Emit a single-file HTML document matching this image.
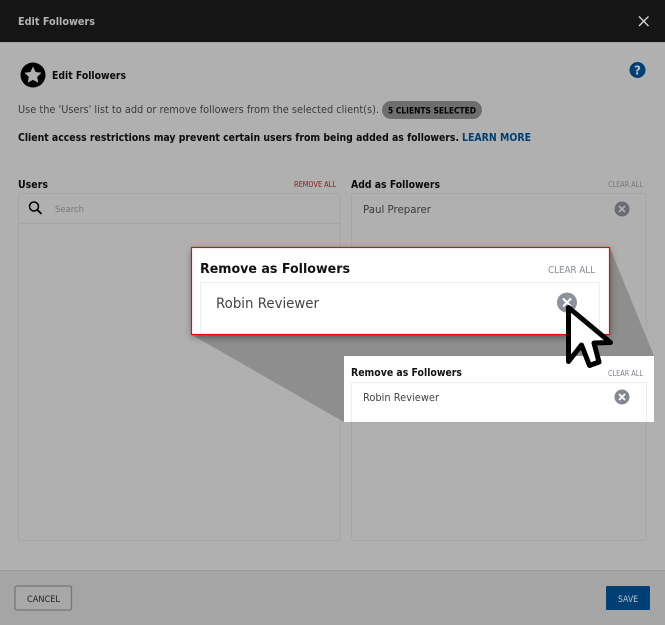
<!DOCTYPE html>
<html><head><meta charset="utf-8"><title>Edit Followers</title>
<style>
html,body{margin:0;padding:0;width:665px;height:625px;overflow:hidden;background:#b0b0b0}
svg{display:block}
text{font-family:"DejaVu Sans",sans-serif}
.b{font-weight:bold}
</style></head><body>
<svg width="665" height="625" viewBox="0 0 665 625" xmlns="http://www.w3.org/2000/svg">
<defs>
<filter id="sh" x="-10%" y="-20%" width="120%" height="150%"><feGaussianBlur stdDeviation="4"/></filter>
<clipPath id="below"><rect x="0" y="240" width="665" height="116"/></clipPath>
</defs>
<rect width="665" height="625" fill="#b0b0b0"/>
<rect width="665" height="42" fill="#151515"/>
<rect y="42" width="665" height="1" fill="#a0a0a0"/>
<text x="18" y="25" class="b" font-size="10.500" fill="#b4b4b4" textLength="77" lengthAdjust="spacingAndGlyphs">Edit Followers</text>
<path d="M639 16.500L648.500 26M648.500 16.500L639 26" stroke="#d8d8d8" stroke-width="1.300" fill="none"/>

<circle cx="33" cy="75" r="12.500" fill="#000"/>
<path d="M33 66.500l2.600 5.500 6 .8-4.400 4.100 1.100 5.900-5.300-2.900-5.300 2.900 1.100-5.900-4.400-4.100 6-.8z" fill="#b0b0b0"/>
<text x="52" y="79" class="b" font-size="10.500" fill="#0a0a0a" textLength="74" lengthAdjust="spacingAndGlyphs">Edit Followers</text>
<circle cx="637.500" cy="70" r="8" fill="#003f73"/>
<text x="637.500" y="74.500" class="b" font-size="12" fill="#b8c4cf" text-anchor="middle">?</text>

<text x="18" y="113" font-size="10.500" fill="#3a3a3a" textLength="361" lengthAdjust="spacingAndGlyphs">Use the 'Users' list to add or remove followers from the selected client(s).</text>
<rect x="382" y="101" width="100" height="18" rx="9" fill="#6e6e6e"/>
<text x="388" y="113.500" class="b" font-size="8.500" fill="#000" textLength="88" lengthAdjust="spacingAndGlyphs">5 CLIENTS SELECTED</text>
<text x="18" y="141" class="b" font-size="10.500" fill="#0a0a0a" textLength="441" lengthAdjust="spacingAndGlyphs">Client access restrictions may prevent certain users from being added as followers.</text>
<text x="462" y="141" class="b" font-size="10.500" fill="#003f73" textLength="69" lengthAdjust="spacingAndGlyphs">LEARN MORE</text>

<text x="18" y="188" class="b" font-size="10.500" fill="#0a0a0a" textLength="30" lengthAdjust="spacingAndGlyphs">Users</text>
<text x="294" y="187" font-size="7.500" fill="#8a1a1a" textLength="42" lengthAdjust="spacingAndGlyphs">REMOVE ALL</text>
<rect x="18.500" y="193.500" width="321.500" height="347" rx="2" fill="#b0b0b0" stroke="#a6a6a6"/>
<line x1="19" y1="223.500" x2="340" y2="223.500" stroke="#a6a6a6"/>
<circle cx="34" cy="206.500" r="4.500" fill="none" stroke="#000" stroke-width="1.500"/>
<line x1="37.500" y1="210" x2="41.500" y2="214" stroke="#000" stroke-width="1.800"/>
<text x="55" y="212" font-size="9" fill="#777" textLength="29" lengthAdjust="spacingAndGlyphs">Search</text>

<text x="351" y="188" class="b" font-size="10.500" fill="#0a0a0a" textLength="89" lengthAdjust="spacingAndGlyphs">Add as Followers</text>
<text x="608" y="187" font-size="7.500" fill="#777" textLength="35" lengthAdjust="spacingAndGlyphs">CLEAR ALL</text>
<rect x="351.500" y="193.500" width="294.500" height="347" rx="2" fill="#b0b0b0" stroke="#a6a6a6"/>
<text x="363" y="213" font-size="10.500" fill="#3a3a3a" textLength="68" lengthAdjust="spacingAndGlyphs">Paul Preparer</text>
<circle cx="622" cy="209" r="7.500" fill="#696c74"/>
<path d="M619 206l6 6M625 206l-6 6" stroke="#b0b0b0" stroke-width="1.800"/>

<rect x="0" y="570" width="665" height="55" fill="#a5a5a5"/>
<rect x="0" y="570" width="665" height="1" fill="#9c9c9c"/>
<rect x="15" y="586" width="56.500" height="24" rx="2" fill="#a8a8a8" stroke="#777" stroke-width="1.300"/>
<text x="27" y="602" font-size="8.500" fill="#222" textLength="33" lengthAdjust="spacingAndGlyphs">CANCEL</text>
<rect x="606" y="586" width="44" height="24" rx="1" fill="#003f73"/>
<text x="618" y="602" font-size="8.500" fill="#bcc9d4" textLength="20" lengthAdjust="spacingAndGlyphs">SAVE</text>

<polygon points="192,335 344,422 344,356 654,356 610,248 610,335" fill="#8e8e8e"/>
<g clip-path="url(#below)"><rect x="192" y="250" width="418" height="87" fill="#000" opacity=".4" filter="url(#sh)"/></g>
<rect x="344" y="356" width="310" height="66" fill="#fff"/>
<text x="351" y="376" class="b" font-size="10.500" fill="#111" textLength="111" lengthAdjust="spacingAndGlyphs">Remove as Followers</text>
<text x="608" y="376" font-size="7.500" fill="#7d828c" textLength="35" lengthAdjust="spacingAndGlyphs">CLEAR ALL</text>
<path d="M351.500 422V382.500H646.500V422" fill="none" stroke="#eee"/>
<text x="363" y="401" font-size="10.500" fill="#444" textLength="76" lengthAdjust="spacingAndGlyphs">Robin Reviewer</text>
<circle cx="622" cy="397" r="7.500" fill="#83878f"/>
<path d="M619 394l6 6M625 394l-6 6" stroke="#fff" stroke-width="1.800"/>

<rect x="191.500" y="247.500" width="418" height="87" fill="#fff" stroke="#f00" stroke-width="1.200"/>
<text x="200" y="273" class="b" font-size="13.500" fill="#111" textLength="150" lengthAdjust="spacingAndGlyphs">Remove as Followers</text>
<text x="548" y="273" font-size="9.500" fill="#858a96" textLength="47" lengthAdjust="spacingAndGlyphs">CLEAR ALL</text>
<path d="M200.500 334V282.500H599.500V334" fill="none" stroke="#eee"/>
<text x="216" y="308" font-size="14.500" fill="#444" textLength="103" lengthAdjust="spacingAndGlyphs">Robin Reviewer</text>
<circle cx="567" cy="302.500" r="10" fill="#8d919b"/>
<path d="M563 298.500l8 8M571 298.500l-8 8" stroke="#fff" stroke-width="2"/>
<path d="M568.500 307.500L610.500 342.500L594 343L599 362L589.500 365.500L581.500 345L568.500 361.500Z" fill="#fff" stroke="#000" stroke-width="5" stroke-linejoin="round"/>
</svg>
</body></html>
